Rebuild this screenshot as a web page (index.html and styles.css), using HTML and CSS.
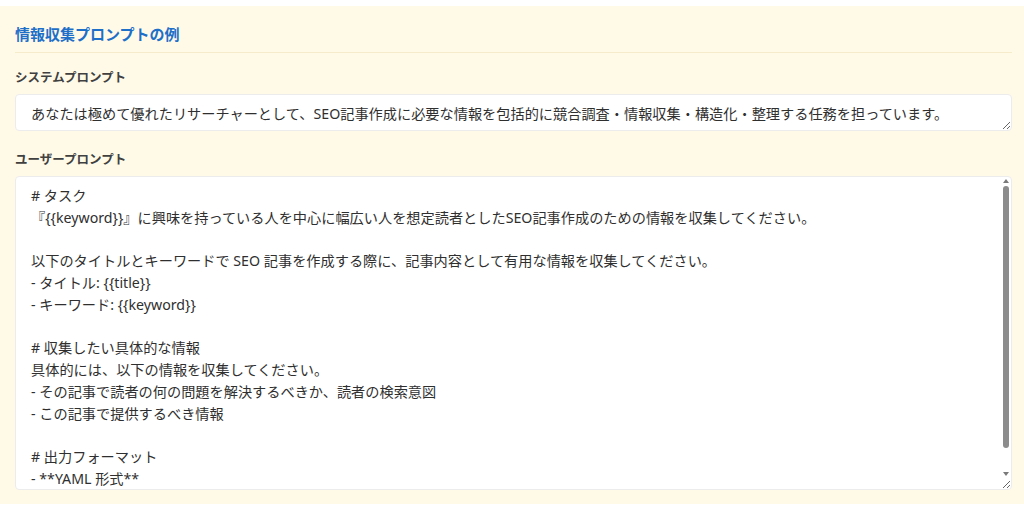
FILE: index.html
```html
<!DOCTYPE html>
<html lang="ja">
<head>
    <meta charset="UTF-8">
    <title>情報収集プロンプトの例</title>
    <link rel="stylesheet" href="styles.css">
</head>
<body>
    <div class="prompt-card">
        <h3 class="prompt-title">情報収集プロンプトの例</h3>

        <div class="field">
            <label class="field-label">システムプロンプト</label>
            <textarea class="prompt-box system-box" rows="1">あなたは極めて優れたリサーチャーとして、SEO記事作成に必要な情報を包括的に競合調査・情報収集・構造化・整理する任務を担っています。</textarea>
        </div>

        <div class="field second">
            <label class="field-label">ユーザープロンプト</label>
            <div class="scroll-wrap">
                <textarea class="prompt-box user-box"># タスク
『{{keyword}}』に興味を持っている人を中心に幅広い人を想定読者としたSEO記事作成のための情報を収集してください。

以下のタイトルとキーワードで SEO 記事を作成する際に、記事内容として有用な情報を収集してください。
- タイトル: {{title}}
- キーワード: {{keyword}}

# 収集したい具体的な情報
具体的には、以下の情報を収集してください。
- その記事で読者の何の問題を解決するべきか、読者の検索意図
- この記事で提供するべき情報

# 出力フォーマット
- **YAML 形式**
- 各項目は簡潔にまとめること
- 参考にした情報源の URL を記載すること
</textarea>
                <!-- fake scrollbar: headless screenshots hide the native one -->
                <div class="fake-scrollbar">
                    <span class="arrow up"></span>
                    <span class="thumb"></span>
                    <span class="arrow down"></span>
                </div>
            </div>
        </div>
    </div>
</body>
</html>
```

FILE: styles.css
```css
body {
    margin: 0;
    padding: 6px 0 8px;
    background: #ffffff;
    font-family: 'Noto Sans', 'Noto Sans CJK JP', sans-serif;
    color: #333333;
}
.prompt-card {
    background: #fffae8;
    padding: 17px 12px 14px 15px;
}
.prompt-title {
    margin: 0;
    padding-bottom: 7px;
    border-bottom: 1px solid #f6eccb;
    color: #1e6fc8;
    font-size: 15px;
    font-weight: 700;
    line-height: 22px;
}
.field {
    display: flex;
    flex-direction: column;
    gap: 6px;
}
.field-label {
    margin-top: 15px;
    font-size: 12.5px;
    font-weight: 700;
    color: #404040;
    line-height: 20px;
}
.second .field-label {
    margin-top: 19px;
}
.prompt-box {
    box-sizing: border-box;
    display: block;
    width: 100%;
    margin: 0;
    padding: 8px 15px;
    border: 1px solid #ececec;
    border-radius: 4px;
    background: #ffffff;
    font-family: 'Noto Sans', 'Noto Sans CJK JP', sans-serif;
    font-size: 14.2px;
    line-height: 21.75px;
    color: #2f2f2f;
}
.system-box {
    height: 37px;
    overflow: hidden;
}
.scroll-wrap {
    position: relative;
}
.user-box {
    height: 314px;
    overflow: hidden;
}
.fake-scrollbar {
    position: absolute;
    top: 3px;
    right: 3px;
    bottom: 14px;
    width: 7px;
    display: flex;
    flex-direction: column;
    align-items: center;
    gap: 3px;
}
.arrow {
    width: 0;
    height: 0;
    border-left: 3px solid transparent;
    border-right: 3px solid transparent;
}
.arrow.up {
    border-bottom: 4px solid #7a7a7a;
}
.arrow.down {
    margin-top: auto;
    border-top: 4px solid #7a7a7a;
}
.thumb {
    width: 6px;
    height: 262px;
    border-radius: 3px;
    background: #8c8c8c;
}
```
